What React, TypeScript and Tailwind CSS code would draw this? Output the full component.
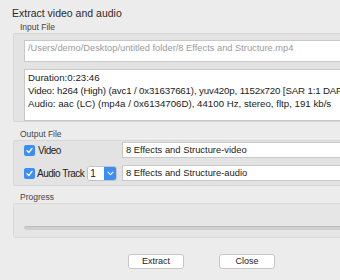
import React from 'react';

const FONT = { fontFamily: '"Liberation Sans", Arial, sans-serif' };

const Check: React.FC = () => (
  <span className="flex items-center justify-center w-[11px] h-[11px] rounded-[2px] bg-[#3c8ef5] shrink-0">
    <svg width="9" height="9" viewBox="0 0 9 9">
      <path d="M2 4.8 L3.8 6.6 L7 2.4" fill="none" stroke="white" strokeWidth="1.4" strokeLinecap="round" strokeLinejoin="round" />
    </svg>
  </span>
);

const Field: React.FC<{ value: string; muted?: boolean }> = ({ value, muted }) => (
  <div
    className={`h-[16px] flex-1 bg-white border border-[#c8c8c8] pl-[3px] leading-[14px] whitespace-nowrap overflow-hidden ${muted ? 'text-[9.3px] text-[#9b9b9b]' : 'text-[9.4px] text-[#222]'}`}
  >
    {value}
  </div>
);

const Label: React.FC<{ text: string }> = ({ text }) => (
  <div className="h-[12px] pl-[7px] text-[8.5px] leading-[12px] text-[#444]">{text}</div>
);

export default function App() {
  return (
    <div className="w-[340px] h-[280px] overflow-hidden bg-[#ececec] text-[#222]" style={FONT}>
      <div className="w-[440px]">
        {/* Title */}
        <div className="pt-[6px] pl-[12px] h-[21px] text-[10.5px] leading-[15px] text-[#2a2a2a]">Extract video and audio</div>

        <div className="ml-[13px]">
          {/* Input File */}
          <Label text="Input File" />
          <div className="h-[89px] border border-[#d6d6d6] bg-[#e3e3e3] rounded-[2px] pt-[6px] pl-[10px] flex flex-col gap-[7px]">
            <Field value="/Users/demo/Desktop/untitled folder/8 Effects and Structure.mp4" muted />
            <div className="h-[52px] bg-white border border-[#c8c8c8] pl-[3px] pt-[1px] text-[9.7px] leading-[13px] whitespace-nowrap overflow-hidden">
              <div>Duration:0:23:46</div>
              <div className="tracking-[-0.15px]">Video: h264 (High) (avc1 / 0x31637661), yuv420p, 1152x720 [SAR 1:1 DAR 8:5], 23.98 fps</div>
              <div>Audio: aac (LC) (mp4a / 0x6134706D), 44100 Hz, stereo, fltp, 191 kb/s</div>
            </div>
          </div>

          {/* Output File */}
          <div className="h-[6px]" />
          <Label text="Output File" />
          <div className="h-[46px] border border-[#d6d6d6] bg-[#e3e3e3] rounded-[2px] pt-[1px] flex flex-col gap-[7px]">
            <div className="flex items-center h-[16px]">
              <div className="w-[108px] pl-[10px] flex items-center gap-[3px] text-[10px] tracking-[-0.5px] whitespace-nowrap">
                <Check />
                <span>Video</span>
              </div>
              <Field value="8 Effects and Structure-video" />
            </div>
            <div className="flex items-center h-[16px]">
              <div className="w-[108px] pl-[10px] flex items-center gap-[2px] text-[10px] tracking-[-0.5px] whitespace-nowrap">
                <Check />
                <span>Audio Track</span>
                <div className="ml-[1px] flex h-[15px] rounded-[3px] overflow-hidden border border-[#c4c4c4] shrink-0">
                  <div className="w-[16px] bg-white pl-[2px] text-[10px] leading-[13px]">1</div>
                  <div className="w-[12px] bg-[#3c8ef5] flex items-center justify-center">
                    <svg width="7" height="5" viewBox="0 0 7 5">
                      <path d="M1 1.2 L3.5 3.7 L6 1.2" fill="none" stroke="white" strokeWidth="1.2" strokeLinecap="round" strokeLinejoin="round" />
                    </svg>
                  </div>
                </div>
              </div>
              <Field value="8 Effects and Structure-audio" />
            </div>
          </div>

          {/* Progress */}
          <div className="h-[5px]" />
          <Label text="Progress" />
          <div className="h-[35px] border border-[#dadada] bg-[#e6e6e6] rounded-[2px] pt-[22px] pl-[10px]">
            <div className="h-[4px] rounded-full bg-[#cfcfcf] border-t border-[#bdbdbd]" />
          </div>
        </div>

        {/* Buttons */}
        <div className="mt-[16px] pl-[128px] flex gap-[35px]">
          <button className="w-[56px] h-[15px] bg-white border border-[#c6c6c6] rounded-[3px] text-[9px] leading-[13px] text-[#222]">Extract</button>
          <button className="w-[56px] h-[15px] bg-white border border-[#c6c6c6] rounded-[3px] text-[9px] leading-[13px] text-[#222]">Close</button>
        </div>
      </div>
    </div>
  );
}
